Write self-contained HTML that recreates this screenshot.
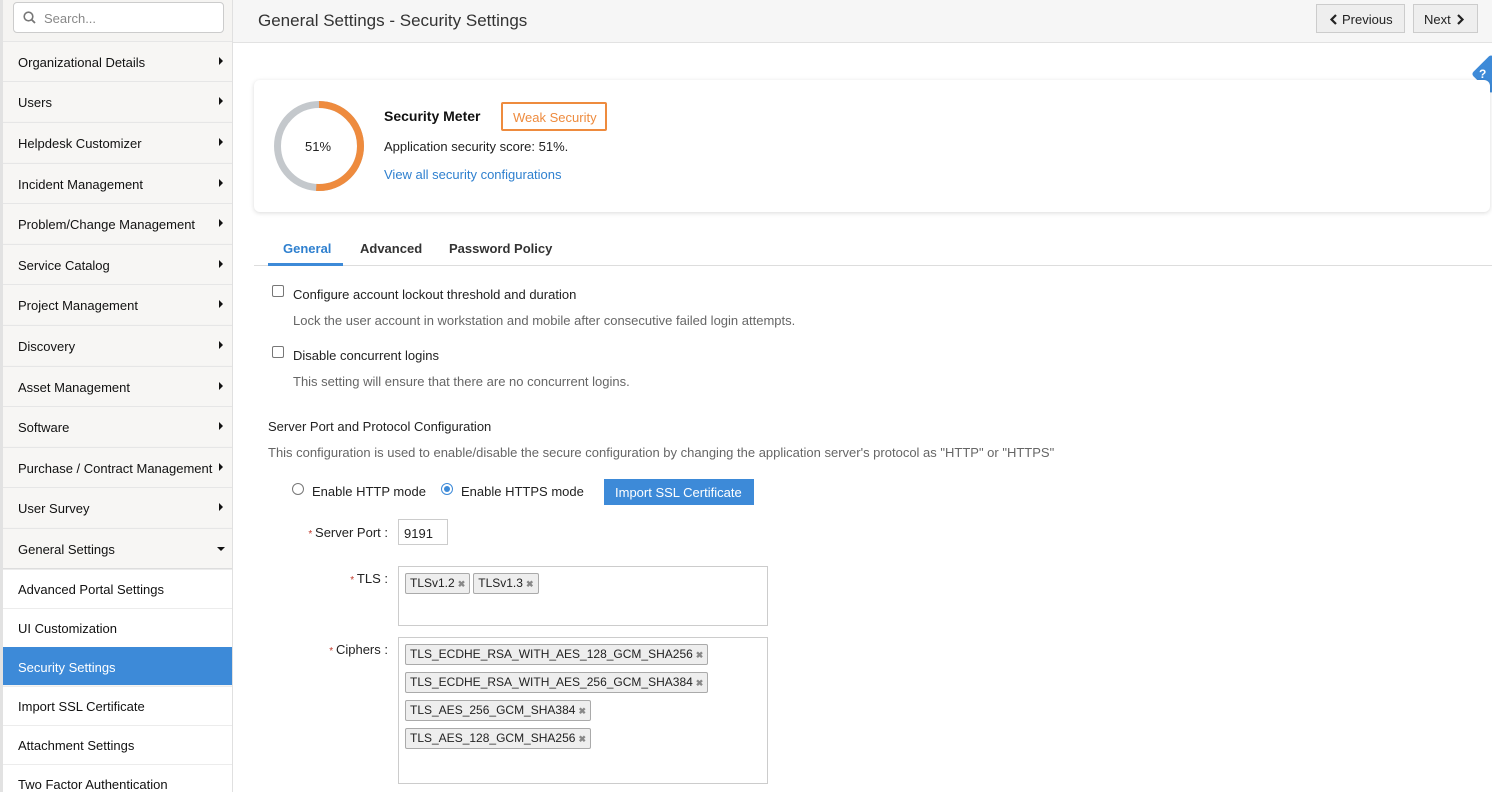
<!DOCTYPE html>
<html><head><meta charset="utf-8"><style>
*{box-sizing:border-box;margin:0;padding:0}
body{width:1492px;height:792px;overflow:hidden;font-family:"Liberation Sans",sans-serif;font-size:13px;color:#222;background:#fff;position:relative}
.abs{position:absolute}
#side{position:absolute;left:0;top:0;width:233px;height:792px;background:#f5f4f2;border-left:3px solid #e2e2e2;border-right:1px solid #e0e0e0}
.search{position:absolute;left:10px;top:2px;width:211px;height:31px;border:1px solid #ccc;border-radius:4px;background:#fff;color:#888;font-size:13px;padding:8px 0 0 30px}
.mi{position:absolute;left:0;width:229px;height:40px;border-top:1px solid #e6e6e6;padding:13px 0 0 15px;font-size:13px;color:#111;background:#f7f6f4}
.mi .ar{position:absolute;right:9px;top:15px;width:0;height:0;border-top:4px solid transparent;border-bottom:4px solid transparent;border-left:4px solid #111}
.mi .dn{position:absolute;right:7px;top:18px;border-left:4px solid transparent;border-right:4px solid transparent;border-top:4px solid #111}
.si{position:absolute;left:0;width:229px;height:39px;border-top:1px solid #ececec;padding:12px 0 0 15px;background:#fff;color:#111}
.si.act{background:#3d8ad8;color:#fff;border-top:none}
#top{position:absolute;left:233px;top:0;width:1259px;height:43px;background:#f6f6f6;border-bottom:1px solid #e2e2e2}
.btn{position:absolute;top:4px;height:29px;border:1px solid #ccc;background:#eee;font-size:13px;padding:7px 0 0 0;color:#222;white-space:nowrap}
.card{position:absolute;left:254px;top:80px;width:1236px;height:132px;background:#fff;border-radius:6px;box-shadow:0 1px 5px rgba(0,0,0,.15)}
.tab{position:absolute;top:241px;font-weight:bold;font-size:13px;color:#333}
.cb{position:absolute;width:12px;height:12px;border:1px solid #777;border-radius:2px;background:#fff}
.gray{color:#666}
.rad{position:absolute;width:12px;height:12px;border:1px solid #777;border-radius:50%;background:#fff}
.tag{display:inline-block;border:1px solid #aaa;background:#eee;border-radius:2px;padding:2px 4px;margin:0 3px 7px 0;font-size:12px;color:#222;line-height:14px;white-space:nowrap}
.tag b{color:#888;font-size:9px;margin-left:3px}
.box{position:absolute;left:398px;width:370px;border:1px solid #ccc;padding:6px 6px 0 6px}
.lbl{position:absolute;text-align:right;font-size:13px}
.lbl i{color:#c0392b;font-style:normal;font-size:10px}
</style></head><body>
<div id="side">
<div class="search"><svg class="abs" style="left:9px;top:8px" width="13" height="13" viewBox="0 0 13 13"><circle cx="5.5" cy="5.5" r="4.3" fill="none" stroke="#777" stroke-width="1.6"/><path d="M8.6 8.6L12 12" stroke="#777" stroke-width="1.8"/></svg>Search...</div>
<div class="mi" style="top:41px">Organizational Details<span class="ar"></span></div>
<div class="mi" style="top:81px">Users<span class="ar"></span></div>
<div class="mi" style="top:122px">Helpdesk Customizer<span class="ar"></span></div>
<div class="mi" style="top:163px">Incident Management<span class="ar"></span></div>
<div class="mi" style="top:203px">Problem/Change Management<span class="ar"></span></div>
<div class="mi" style="top:244px">Service Catalog<span class="ar"></span></div>
<div class="mi" style="top:284px">Project Management<span class="ar"></span></div>
<div class="mi" style="top:325px">Discovery<span class="ar"></span></div>
<div class="mi" style="top:366px">Asset Management<span class="ar"></span></div>
<div class="mi" style="top:406px">Software<span class="ar"></span></div>
<div class="mi" style="top:447px">Purchase / Contract Management<span class="ar"></span></div>
<div class="mi" style="top:487px">User Survey<span class="ar"></span></div>
<div class="mi" style="top:528px;border-bottom:2px solid #ddd;height:42px">General Settings<span class="dn"></span></div>
<div class="si" style="top:569px">Advanced Portal Settings</div>
<div class="si" style="top:608px">UI Customization</div>
<div class="si act" style="top:647px;height:38px;padding-top:13px">Security Settings</div>
<div class="si" style="top:686px">Import SSL Certificate</div>
<div class="si" style="top:725px">Attachment Settings</div>
<div class="si" style="top:764px">Two Factor Authentication</div>
</div>
<div id="top">
<div class="abs" style="left:25px;top:11px;font-size:17px;color:#333">General Settings - Security Settings</div>
<div class="btn" style="left:1083px;width:89px;padding-left:12px"><svg width="9" height="11" viewBox="0 0 9 11" style="vertical-align:-1px;margin-right:4px"><path d="M7 1L2.5 5.5L7 10" fill="none" stroke="#222" stroke-width="2.2"/></svg>Previous</div>
<div class="btn" style="left:1180px;width:65px;padding-left:10px">Next<svg width="9" height="11" viewBox="0 0 9 11" style="vertical-align:-1px;margin-left:5px"><path d="M2 1L6.5 5.5L2 10" fill="none" stroke="#222" stroke-width="2.2"/></svg></div>
</div>
<div class="abs" style="left:1477px;top:60px;width:28px;height:28px;background:#3d8ad8;transform:rotate(45deg);border-radius:3px"></div>
<div class="abs" style="left:1479px;top:67px;color:#fff;font-weight:bold;font-size:12px">?</div>
<div class="card">
<svg class="abs" style="left:19px;top:20px" width="92" height="92" viewBox="0 0 92 92"><circle cx="46" cy="46" r="41.5" fill="none" stroke="#c4c8cc" stroke-width="7"/><circle cx="46" cy="46" r="41.5" fill="none" stroke="#ee8b3e" stroke-width="7" stroke-dasharray="133 400" transform="rotate(-90 46 46)"/></svg>
<div class="abs" style="left:51px;top:59px;font-size:13px">51%</div>
<div class="abs" style="left:130px;top:28px;font-size:14px;font-weight:bold;color:#111">Security Meter</div>
<div class="abs" style="left:247px;top:22px;width:106px;height:29px;border:2px solid #ee8b3e;border-radius:2px;color:#ee8b3e;padding:6px 0 0 10px">Weak Security</div>
<div class="abs" style="left:130px;top:59px">Application security score: 51%.</div>
<div class="abs" style="left:130px;top:87px;color:#2f80cf">View all security configurations</div>
</div>
<div class="tab" style="left:283px;color:#2f80cf">General</div>
<div class="tab" style="left:360px">Advanced</div>
<div class="tab" style="left:449px">Password Policy</div>
<div class="abs" style="left:254px;top:265px;width:1238px;height:1px;background:#ddd"></div>
<div class="abs" style="left:268px;top:263px;width:75px;height:3px;background:#3d8ad8"></div>
<div class="cb" style="left:272px;top:285px"></div>
<div class="abs" style="left:293px;top:287px">Configure account lockout threshold and duration</div>
<div class="abs gray" style="left:293px;top:313px">Lock the user account in workstation and mobile after consecutive failed login attempts.</div>
<div class="cb" style="left:272px;top:346px"></div>
<div class="abs" style="left:293px;top:348px">Disable concurrent logins</div>
<div class="abs gray" style="left:293px;top:374px">This setting will ensure that there are no concurrent logins.</div>
<div class="abs" style="left:268px;top:419px">Server Port and Protocol Configuration</div>
<div class="abs gray" style="left:268px;top:445px">This configuration is used to enable/disable the secure configuration by changing the application server's protocol as "HTTP" or "HTTPS"</div>
<div class="rad" style="left:292px;top:483px"></div>
<div class="abs" style="left:312px;top:484px">Enable HTTP mode</div>
<div class="rad" style="left:441px;top:483px;border-color:#3d8ad8"><div class="abs" style="left:2px;top:2px;width:6px;height:6px;border-radius:50%;background:#3d8ad8"></div></div>
<div class="abs" style="left:461px;top:484px">Enable HTTPS mode</div>
<div class="abs" style="left:604px;top:479px;width:150px;height:26px;background:#3d8ad8;color:#fff;padding:6px 0 0 11px">Import SSL Certificate</div>
<div class="lbl" style="left:300px;top:525px;width:88px"><i>* </i>Server Port :</div>
<div class="abs" style="left:398px;top:519px;width:50px;height:26px;border:1px solid #ccc;padding:6px 0 0 5px">9191</div>
<div class="lbl" style="left:300px;top:571px;width:88px"><i>* </i>TLS :</div>
<div class="box" style="top:566px;height:60px"><span class="tag">TLSv1.2<b>✖</b></span><span class="tag">TLSv1.3<b>✖</b></span></div>
<div class="lbl" style="left:300px;top:642px;width:88px"><i>* </i>Ciphers :</div>
<div class="box" style="top:637px;height:147px"><span class="tag">TLS_ECDHE_RSA_WITH_AES_128_GCM_SHA256<b>✖</b></span><br><span class="tag">TLS_ECDHE_RSA_WITH_AES_256_GCM_SHA384<b>✖</b></span><br><span class="tag">TLS_AES_256_GCM_SHA384<b>✖</b></span><br><span class="tag">TLS_AES_128_GCM_SHA256<b>✖</b></span></div>
</body></html>
